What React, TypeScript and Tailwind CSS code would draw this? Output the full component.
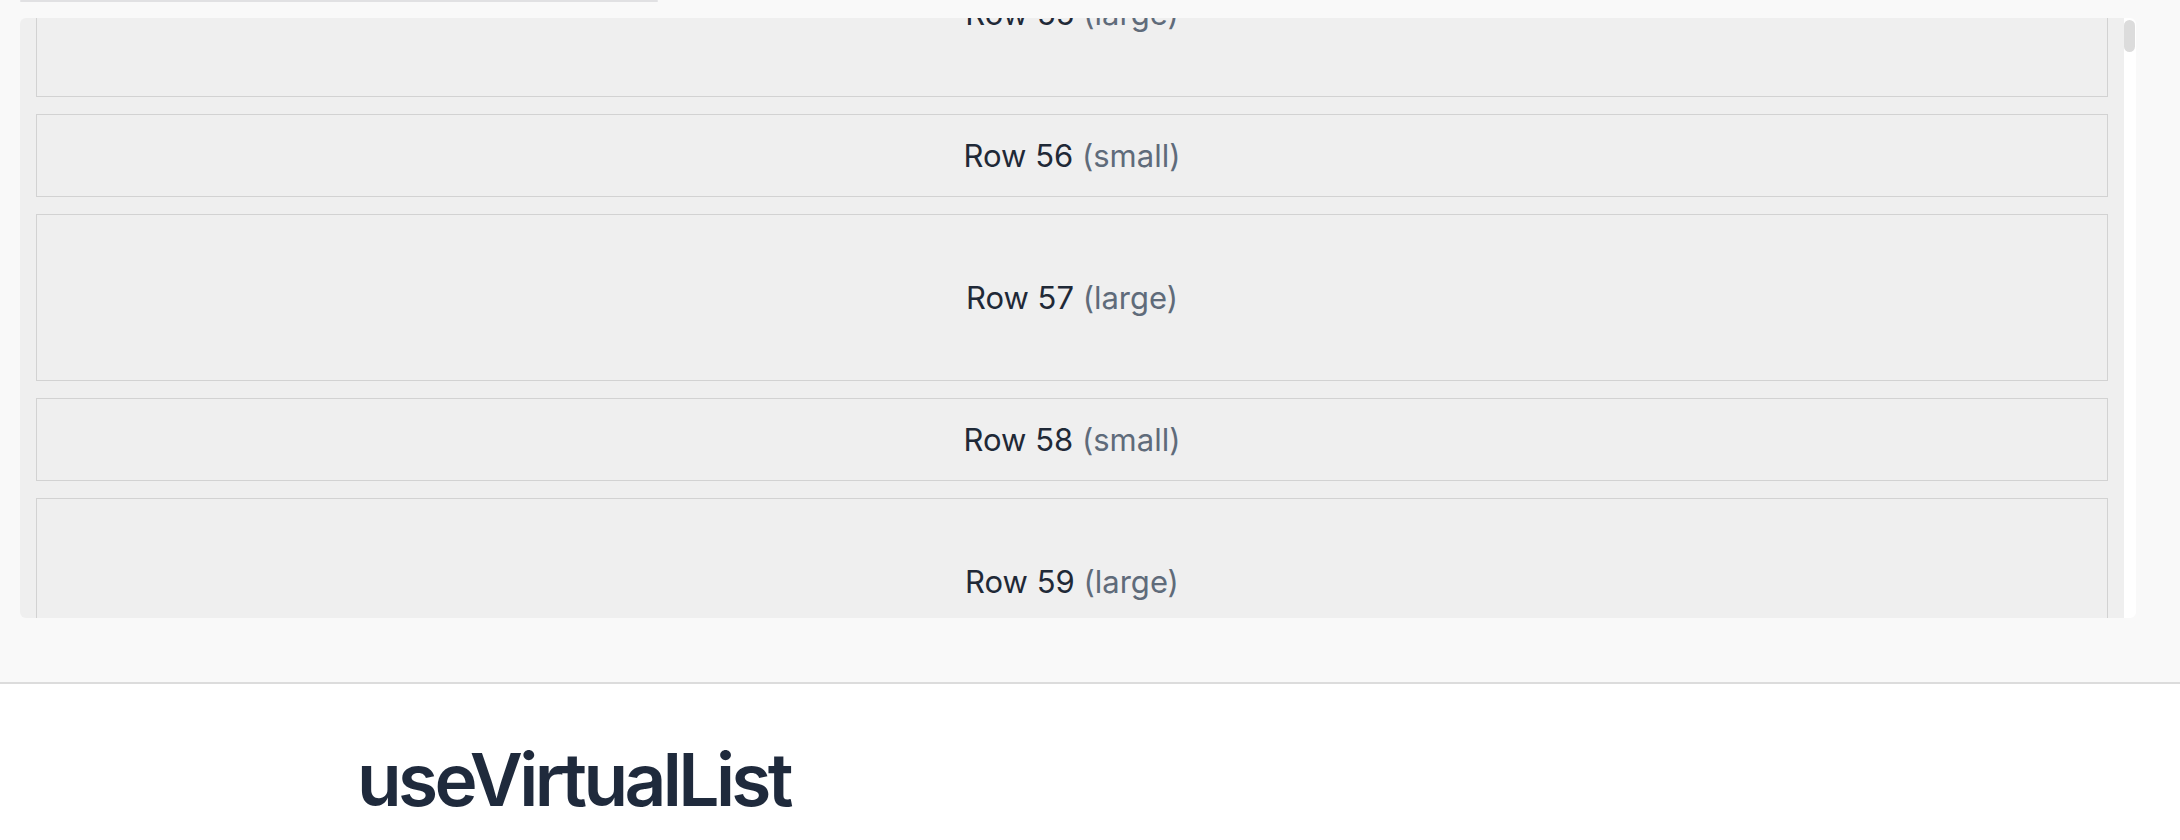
const rows = [55, 56, 57, 58, 59, 60].map((n) => ({ n, size: n % 2 === 0 ? "small" : "large" }));

function Row({ n, size }: { n: number; size: string }) {
  return (
    <div
      className={`flex shrink-0 items-center justify-center border-[1.5px] border-[#d2d2d2] bg-[#efefef] text-[31px] text-[#1f2937] ${
        size === "small" ? "h-[83px]" : "h-[167px]"
      }`}
    >
      <span className="pt-[1px]">
        Row {n} <span className="text-[#5f6b7a]">({size})</span>
      </span>
    </div>
  );
}

export default function App() {
  return (
    <div className="min-h-screen bg-white font-['Inter','Noto_Sans',sans-serif]">
      <section className="border-b-2 border-[#dcdcdc] bg-[#f9f9f9] pb-[64px]">
        <div className="ml-[20px] h-[2px] w-[638px] rounded-full bg-[#e1e1e3]" />
        <div className="ml-[20px] mt-[16px] flex h-[600px] w-[2116px]">
          <div className="flex-1 overflow-hidden rounded-l-[6px] bg-[#efefef] px-[16px]">
            <div className="-mt-[88px] flex flex-col gap-[17px]">
              {rows.map((r) => (
                <Row key={r.n} n={r.n} size={r.size} />
              ))}
            </div>
          </div>
          <div className="w-[12px] rounded-r-[6px] bg-white pt-[2px]">
            <div className="h-[32px] w-[11px] rounded-full bg-[#dcdcdc]" />
          </div>
        </div>
      </section>
      <h1 className="mt-[59px] pl-[357px] text-[73px] font-semibold leading-none tracking-[-0.05em] text-[#1f2a3c]">
        useVirtualList
      </h1>
    </div>
  );
}
